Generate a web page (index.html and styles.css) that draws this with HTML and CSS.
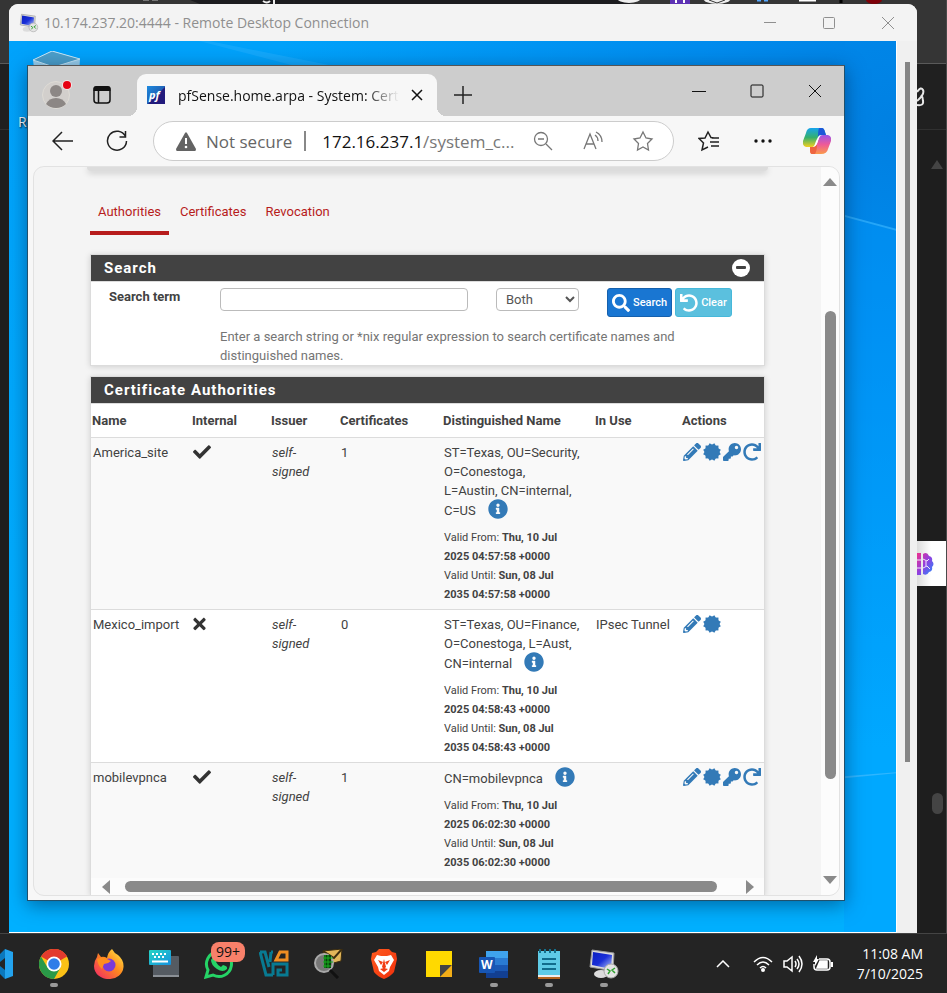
FILE: index.html
```html
<!DOCTYPE html>
<html lang="en">
<head>
<meta charset="utf-8">
<title>Remote Desktop Connection</title>
<link rel="stylesheet" href="styles.css">
</head>
<body>
<svg class="defs" aria-hidden="true">
  <defs>
    <linearGradient id="g-screen" x1="0" y1="0" x2="1" y2="1"><stop offset="0" stop-color="#0a1fc0"/><stop offset=".5" stop-color="#1a2fd8"/><stop offset="1" stop-color="#b9cdf8"/></linearGradient>
    <linearGradient id="g-pf" x1="0" y1="0" x2="1" y2="1"><stop offset="0" stop-color="#1d8be0"/><stop offset=".5" stop-color="#2064b8"/><stop offset=".55" stop-color="#221a7c"/></linearGradient>
    <linearGradient id="g-fox" x1="1" y1="0" x2="0" y2="1"><stop offset="0" stop-color="#fff24a"/><stop offset=".45" stop-color="#ff8a1e"/><stop offset="1" stop-color="#f0206c"/></linearGradient>
    <linearGradient id="g-cop1" x1="0" y1="0" x2="0" y2="1"><stop offset="0" stop-color="#16a4ee"/><stop offset=".5" stop-color="#35b06c"/><stop offset="1" stop-color="#f4d020"/></linearGradient>
    <linearGradient id="g-cop2" x1="0" y1="0" x2="0" y2="1"><stop offset="0" stop-color="#9a56e8"/><stop offset=".5" stop-color="#ee5a98"/><stop offset="1" stop-color="#fb9a4a"/></linearGradient>
    <linearGradient id="g-brain" x1="0" y1="0" x2="1" y2="1"><stop offset="0" stop-color="#f0308c"/><stop offset=".5" stop-color="#9040e0"/><stop offset="1" stop-color="#1e90ff"/></linearGradient>
    <linearGradient id="g-brave" x1="0" y1="0" x2="1" y2="1"><stop offset="0" stop-color="#ff5a1e"/><stop offset="1" stop-color="#f0300c"/></linearGradient>
    <linearGradient id="g-key" x1="0" y1="0" x2="1" y2="1"><stop offset="0" stop-color="#27d6c4"/><stop offset="1" stop-color="#1590e0"/></linearGradient>
    <symbol id="i-rdp" viewBox="0 0 32 32"><path d="M4 2l22 3-1 18-23-4z" fill="#dadada" stroke="#999"/><path d="M5 4l19 3-1 14L4 17z" fill="url(#g-screen)"/><ellipse cx="13" cy="26" rx="7" ry="4" fill="#dcdcdc"/><circle cx="23" cy="23" r="7" fill="#e4e4e4" stroke="#aaa"/><path d="M19 21l3 2-2 3M27 20l-3 2 3 3" fill="none" stroke="#2fa12f" stroke-width="1.500"/></symbol>
    <symbol id="i-check" viewBox="0 0 512 512"><path d="M173.898 439.404l-166.4-166.4c-9.997-9.997-9.997-26.206 0-36.204l36.203-36.204c9.997-9.998 26.207-9.998 36.204 0L192 312.69 432.095 72.596c9.997-9.997 26.207-9.997 36.204 0l36.203 36.204c9.997 9.997 9.997 26.206 0 36.204l-294.4 294.401c-9.998 9.997-26.207 9.997-36.204-.001z"/></symbol>
    <symbol id="i-times" viewBox="0 0 352 512"><path d="M242.72 256l100.07-100.07c12.28-12.28 12.28-32.19 0-44.48l-22.24-22.24c-12.28-12.28-32.19-12.28-44.48 0L176 189.28 75.93 89.21c-12.28-12.28-32.19-12.28-44.48 0L9.21 111.45c-12.28 12.28-12.28 32.19 0 44.48L109.28 256 9.21 356.07c-12.28 12.28-12.28 32.19 0 44.48l22.24 22.24c12.28 12.28 32.2 12.28 44.48 0L176 322.72l100.07 100.07c12.28 12.28 32.2 12.28 44.48 0l22.24-22.24c12.28-12.28 12.28-32.19 0-44.48L242.72 256z"/></symbol>
    <symbol id="i-search" viewBox="0 0 512 512"><path d="M505 442.7L405.3 343c-4.5-4.5-10.6-7-17-7H372c27.6-35.3 44-79.7 44-128C416 93.1 322.9 0 208 0S0 93.1 0 208s93.1 208 208 208c48.3 0 92.7-16.4 128-44v16.3c0 6.4 2.5 12.5 7 17l99.7 99.7c9.4 9.4 24.6 9.4 33.9 0l28.3-28.3c9.4-9.4 9.4-24.6.1-34zM208 336c-70.7 0-128-57.2-128-128 0-70.7 57.2-128 128-128 70.7 0 128 57.2 128 128 0 70.7-57.2 128-128 128z"/></symbol>
    <symbol id="i-undo" viewBox="0 0 512 512"><path d="M212.333 224.333H12c-6.627 0-12-5.373-12-12V12C0 5.373 5.373 0 12 0h48c6.627 0 12 5.373 12 12v78.112C117.773 39.279 184.26 7.47 258.175 8.007c136.906.994 246.448 111.623 246.157 248.532C504.041 393.258 393.12 504 256.333 504c-64.089 0-122.496-24.313-166.51-64.215-5.099-4.622-5.334-12.554-.467-17.42l33.967-33.967c4.474-4.474 11.662-4.717 16.401-.525C170.76 415.336 211.58 432 256.333 432c97.268 0 176-78.716 176-176 0-97.267-78.716-176-176-176-58.496 0-110.28 28.476-142.274 72.333h98.274c6.627 0 12 5.373 12 12v48c0 6.627-5.373 12-12 12z"/></symbol>
    <symbol id="i-redo" viewBox="0 0 512 512"><path transform="translate(512 0) scale(-1 1)" d="M212.333 224.333H12c-6.627 0-12-5.373-12-12V12C0 5.373 5.373 0 12 0h48c6.627 0 12 5.373 12 12v78.112C117.773 39.279 184.26 7.47 258.175 8.007c136.906.994 246.448 111.623 246.157 248.532C504.041 393.258 393.12 504 256.333 504c-64.089 0-122.496-24.313-166.51-64.215-5.099-4.622-5.334-12.554-.467-17.42l33.967-33.967c4.474-4.474 11.662-4.717 16.401-.525C170.76 415.336 211.58 432 256.333 432c97.268 0 176-78.716 176-176 0-97.267-78.716-176-176-176-58.496 0-110.28 28.476-142.274 72.333h98.274c6.627 0 12 5.373 12 12v48c0 6.627-5.373 12-12 12z"/></symbol>
    <symbol id="i-info" viewBox="0 0 512 512"><path d="M256 8C119.043 8 8 119.083 8 256c0 136.997 111.043 248 248 248s248-111.003 248-248C504 119.083 392.957 8 256 8zm0 110c23.196 0 42 18.804 42 42s-18.804 42-42 42-42-18.804-42-42 18.804-42 42-42zm56 254c0 6.627-5.373 12-12 12h-88c-6.627 0-12-5.373-12-12v-24c0-6.627 5.373-12 12-12h12v-64h-12c-6.627 0-12-5.373-12-12v-24c0-6.627 5.373-12 12-12h64c6.627 0 12 5.373 12 12v100h12c6.627 0 12 5.373 12 12v24z"/></symbol>
    <symbol id="i-key" viewBox="0 0 512 512"><path d="M512 176.001C512 273.203 433.202 352 336 352c-11.22 0-22.19-1.062-32.827-3.069l-24.012 27.014A23.999 23.999 0 0 1 261.223 384H224v40c0 13.255-10.745 24-24 24h-40v40c0 13.255-10.745 24-24 24H24c-13.255 0-24-10.745-24-24v-78.059c0-6.365 2.529-12.47 7.029-16.971l161.802-161.802C163.108 213.814 160 195.271 160 176 160 78.798 238.797.001 335.999 0 433.488-.001 512 78.511 512 176.001zM336 128c0 26.51 21.49 48 48 48s48-21.49 48-48-21.49-48-48-48-48 21.49-48 48z"/></symbol>
    <symbol id="i-pencil" viewBox="0 0 512 512"><path d="M497.9 142.1l-46.1 46.1c-4.7 4.7-12.3 4.7-17 0l-111-111c-4.7-4.7-4.7-12.3 0-17l46.1-46.1c18.7-18.7 49.1-18.7 67.9 0l60.1 60.1c18.8 18.7 18.8 49.1 0 67.9zM284.2 99.8L21.6 362.4.4 483.9c-2.9 16.4 11.4 30.6 27.8 27.8l121.5-21.3 262.6-262.6c4.7-4.7 4.7-12.3 0-17l-111-111c-4.8-4.7-12.4-4.7-17.1 0zM124.1 339.9c-5.5-5.5-5.5-14.3 0-19.8l154-154c5.5-5.5 14.3-5.5 19.8 0s5.5 14.3 0 19.8l-154 154c-5.5 5.5-14.3 5.5-19.8 0zM88 424h48v36.3l-64.5 11.3-31.1-31.1L51.7 376H88v48z"/></symbol>
    <symbol id="i-cert" viewBox="0 0 24 24"><rect x="3.400" y="3.400" width="17.200" height="17.200"/><rect x="3.400" y="3.400" width="17.200" height="17.200" transform="rotate(30 12 12)"/><rect x="3.400" y="3.400" width="17.200" height="17.200" transform="rotate(60 12 12)"/></symbol>
  </defs>
</svg>

<div class="desktop">
  <div class="host-top">
    <svg viewBox="0 0 947 6" width="947" height="6" aria-hidden="true"><path d="M190 0h440v4H200z" fill="#1c1c1f"/><path d="M143 0h6M152 0h6" stroke="#777" stroke-width="2"/><path d="M263 1q4 3 7 0M274 0v4" stroke="#eee" stroke-width="2" fill="none"/><ellipse cx="629" cy="-2" rx="12" ry="5" fill="#eee"/><path d="M670 0h20v4h-20z" fill="#5d32b4"/><path d="M676 0v3M684 0v3" stroke="#fff" stroke-width="2"/><ellipse cx="717" cy="-2" rx="14" ry="6" fill="#eee"/><path d="M709 0l8 3 8-3" stroke="#333" fill="none"/><path d="M757 0h4M764 0h4" stroke="#55a8ff" stroke-width="3"/><path d="M799 0h17" stroke="#fff" stroke-width="3"/><path d="M841 0v3" stroke="#000" stroke-width="3"/><ellipse cx="874" cy="0" rx="8" ry="4" fill="#7d0008"/></svg>
  </div>
  <aside class="host-side">
    <svg class="pen" viewBox="0 0 9 20" width="9" height="20" aria-hidden="true"><path d="M0 5Q4-1 6 3T0 14M0 18q7 1 6-4 0-4-2-6" fill="none" stroke="#e8e8e8" stroke-width="2"/></svg>
    <i class="host-up"></i>
    <div class="brain"><svg viewBox="0 0 17 24" width="17" height="24" aria-hidden="true"><path d="M0 1h4v22H0zM6 2q4-3 6 2 4 1 3 5 3 3 0 6 1 4-3 5-2 4-6 2z" fill="url(#g-brain)"/><path d="M0 8h4M0 16h4M6 7l4 2 2-2M6 16l4-2 3 3M9 9v5" stroke="#f1e8fb" fill="none"/></svg></div>
    <i class="host-thumb"></i>
  </aside>

  <section class="rdp">
    <header class="rdp-bar">
      <svg width="20" height="20" aria-hidden="true"><use href="#i-rdp"/></svg>
      <span class="rdp-title">10.174.237.20:4444 - Remote Desktop Connection</span>
      <button class="wbtn" aria-label="Minimize"><svg width="14" height="14" viewBox="0 0 14 14"><path d="M1 6.500h12"/></svg></button>
      <button class="wbtn" aria-label="Maximize"><svg width="14" height="14" viewBox="0 0 14 14"><rect x="1.500" y="1.500" width="11" height="11" rx="1"/></svg></button>
      <button class="wbtn" aria-label="Close"><svg width="14" height="14" viewBox="0 0 14 14"><path d="M1 1l12 12M13 1L1 13"/></svg></button>
    </header>
    <div class="rdp-body">
      <div class="wallpaper">
        <svg class="rays" viewBox="0 0 887 892" preserveAspectRatio="none" aria-hidden="true"><path d="M190 0L290 26H330L200 0z" fill="#35b4ff" opacity=".35"/><path d="M835 176l52 14v702h-52z" fill="#009cff" opacity=".35"/><path d="M835 176l52 14v-2l-52-14z" fill="#35b4ff" opacity=".7"/><path d="M835 738l52-5v-1l-52 4z" fill="#2fb6ff"/></svg>
        <div class="bin">
          <svg viewBox="0 0 48 60" width="48" height="60" aria-hidden="true"><path d="M0 9L19 0l28 8-3 45-38 3z" fill="#9bd1ee"/><path d="M0 9L19 0l28 8-26 8z" fill="#4c9fca" stroke="#c8e8f7"/></svg>
          <span>Recycle Bin</span>
        </div>

        <section class="edge">
          <header class="tabstrip">
            <button class="profile" aria-label="Profile"><svg width="30" height="30" viewBox="0 0 30 30"><circle cx="14" cy="15" r="13.500" fill="#d2cfcc" stroke="#dedbd5"/><circle cx="14" cy="11" r="6" fill="#8c8785"/><path d="M4 24q3-6 10-6t10 6q-4 4-10 4T4 24z" fill="#8c8785"/><circle cx="25" cy="5" r="5" fill="#f3e4e4"/><circle cx="25" cy="5" r="4" fill="#e60012"/></svg></button>
            <button class="tabmenu" aria-label="Tab actions"><svg width="20" height="20" viewBox="0 0 20 20"><rect x="2" y="2" width="16" height="16" rx="3" fill="none" stroke="#111" stroke-width="1.500"/><path d="M1.500 3q0-2 3-2h11q3 0 3 2v3h-17z" fill="#111"/><path d="M6.500 6v12" stroke="#111" stroke-width="1.500"/></svg></button>
            <div class="tab">
              <svg class="fav" width="18" height="18" viewBox="0 0 18 18"><rect width="18" height="18" fill="url(#g-pf)"/><text x="2" y="13" class="pf">pf</text></svg>
              <span class="tab-title">pfSense.home.arpa - System: Cert</span>
              <button aria-label="Close tab"><svg width="12" height="12" viewBox="0 0 12 12"><path d="M1 1l10 10M11 1L1 11" stroke="#111" stroke-width="1.500"/></svg></button>
            </div>
            <button class="newtab" aria-label="New tab"><svg width="18" height="18" viewBox="0 0 18 18"><path d="M9 0v18M0 9h18" stroke="#222" stroke-width="1.500"/></svg></button>
            <div class="winctl">
              <button aria-label="Minimize"><svg width="14" height="14" viewBox="0 0 14 14"><path d="M0 7.500h14"/></svg></button>
              <button aria-label="Maximize"><svg width="14" height="14" viewBox="0 0 14 14"><rect x="1" y="1" width="12" height="12" rx="1"/></svg></button>
              <button aria-label="Close"><svg width="14" height="14" viewBox="0 0 14 14"><path d="M1 1l12 12M13 1L1 13"/></svg></button>
            </div>
          </header>
          <nav class="toolbar">
            <button class="tool" aria-label="Back"><svg width="22" height="20" viewBox="0 0 22 20"><path d="M10 1L1 10l9 9M1 10h20"/></svg></button>
            <button class="tool" aria-label="Refresh"><svg width="22" height="22" viewBox="0 0 22 22"><path d="M19.500 6.500A9.500 9.500 0 1 0 20.500 11M19.500 1v6h-6"/></svg></button>
            <div class="address">
              <svg width="20" height="19" viewBox="0 0 20 19"><path d="M9 1q1-1.500 2 0l9 16q0 2-1 2H1q-1 0-1-2z" fill="#636363"/><path d="M10 6v6" stroke="#fff" stroke-width="2"/><circle cx="10" cy="15" r="1.300" fill="#fff"/></svg>
              <span class="notsecure">Not secure</span>
              <span class="sep"></span>
              <span class="url"><b>172.16.237.1</b>/system_c...</span>
              <button aria-label="Zoom"><svg width="20" height="20" viewBox="0 0 20 20"><circle cx="8" cy="8" r="6.500"/><path d="M13 13l6 6M5 8h6"/></svg></button>
              <button aria-label="Read aloud"><svg width="20" height="20" viewBox="0 0 20 20"><path d="M1 18L7 3l6 15M3 13h8M12 4q3 2 3 6M13 1q6 3 6 10"/></svg></button>
              <button aria-label="Favorite"><svg width="22" height="22" viewBox="0 0 22 22"><path d="M11 2l3 6 6 1-4.500 4.500 1 6.500L11 17l-5.500 3 1-6.500L2 9l6-1z"/></svg></button>
            </div>
            <button class="tool" aria-label="Favorites"><svg width="22" height="22" viewBox="0 0 22 22"><path d="M16 8l-3-.5L10 2 7 8 1 8.500l4.500 4.500L4 20l6-3M14 8h7M12 12h9M13 16h8"/></svg></button>
            <button class="tool" aria-label="More"><svg width="18" height="6" viewBox="0 0 18 6"><g fill="#111" stroke="none"><circle cx="2" cy="3" r="1.700"/><circle cx="9" cy="3" r="1.700"/><circle cx="16" cy="3" r="1.700"/></g></svg></button>
            <button class="tool" aria-label="Copilot"><svg width="28" height="28" viewBox="0 0 28 28"><g stroke="none"><path d="M8 1h11q2 0 3 4l1 3h-4q-3 0-4 4l-2 5q-1 3-4 3H3q-4-1-3-6L3 6q1-5 5-5z" fill="url(#g-cop1)"/><path d="M16 1h3q2 0 3 4l1 3h-4q-3 0-4 3 0-8 1-10z" fill="#1c58d8"/><path d="M20 27H9q-2 0-2-4l0-3h3q3 0 4-4l2-5q1-3 4-3h5q4 1 3 6l-3 8q-1 5-7 5z" fill="url(#g-cop2)"/><path d="M12 27H9q-2 0-2-4v-3h3q3 0 4-3 0 7-2 10z" fill="#ee6440"/><path d="M15 10q1-2 3-2-2 2-3 6-1 5-5 6 2-2 3-6z" fill="#fff"/></g></svg></button>
          </nav>

          <div class="view">
            <main class="page">
              <div class="navshadow"></div>
              <nav class="tabs"><a class="on" href="#a">Authorities</a><a href="#c">Certificates</a><a href="#r">Revocation</a></nav>

              <form class="panel">
                <h2>Search <button type="button" class="fold" aria-label="Collapse"><svg width="18" height="18" viewBox="0 0 18 18"><circle cx="9" cy="9" r="9" fill="#fff"/><rect x="4" y="7" width="10" height="3" rx="1" fill="#424242"/></svg></button></h2>
                <div class="search">
                  <label for="term">Search term</label>
                  <input id="term" type="text">
                  <select id="scope" aria-label="Search in"><option>Both</option></select>
                  <div class="btns">
                    <button type="button" class="btn blue"><svg width="18" height="18"><use href="#i-search"/></svg>Search</button>
                    <button type="button" class="btn cyan"><svg width="18" height="18"><use href="#i-undo"/></svg>Clear</button>
                  </div>
                  <p>Enter a search string or *nix regular expression to search certificate names and distinguished names.</p>
                </div>
              </form>

              <section class="panel grow">
                <h2>Certificate Authorities</h2>
                <div class="tablewrap">
                <table>
                  <colgroup><col class="c1"><col class="c2"><col class="c3"><col class="c4"><col class="c5"><col class="c6"><col></colgroup>
                  <thead><tr><th>Name</th><th>Internal</th><th>Issuer</th><th>Certificates</th><th>Distinguished Name</th><th>In Use</th><th>Actions</th></tr></thead>
                  <tbody>
                    <tr><td>America_site</td><td><svg class="mark" width="18" height="18"><use href="#i-check"/></svg></td><td><i>self-<br>signed</i></td><td>1</td>
                      <td>ST=Texas, OU=Security,<br>O=Conestoga,<br>L=Austin, CN=internal,<div class="last">C=US <button aria-label="Details"><svg width="20" height="20"><use href="#i-info"/></svg></button></div>
                        <div class="valid">Valid From: <b>Thu, 10 Jul<br>2025 04:57:58 +0000</b><br>Valid Until: <b>Sun, 08 Jul<br>2035 04:57:58 +0000</b></div></td>
                      <td></td>
                      <td class="act"><a href="#e" aria-label="Edit"><svg><use href="#i-pencil"/></svg></a><a href="#x" aria-label="Export CA"><svg><use href="#i-cert"/></svg></a><a href="#k" aria-label="Export key"><svg><use href="#i-key"/></svg></a><a href="#n" aria-label="Renew"><svg><use href="#i-redo"/></svg></a></td></tr>
                    <tr><td>Mexico_import</td><td><svg class="mark" width="13" height="18"><use href="#i-times"/></svg></td><td><i>self-<br>signed</i></td><td>0</td>
                      <td>ST=Texas, OU=Finance,<br>O=Conestoga, L=Aust,<div class="last">CN=internal <button aria-label="Details"><svg width="20" height="20"><use href="#i-info"/></svg></button></div>
                        <div class="valid">Valid From: <b>Thu, 10 Jul<br>2025 04:58:43 +0000</b><br>Valid Until: <b>Sun, 08 Jul<br>2035 04:58:43 +0000</b></div></td>
                      <td>IPsec Tunnel</td>
                      <td class="act"><a href="#e" aria-label="Edit"><svg><use href="#i-pencil"/></svg></a><a href="#x" aria-label="Export CA"><svg><use href="#i-cert"/></svg></a></td></tr>
                    <tr><td>mobilevpnca</td><td><svg class="mark" width="18" height="18"><use href="#i-check"/></svg></td><td><i>self-<br>signed</i></td><td>1</td>
                      <td><div class="last">CN=mobilevpnca <button aria-label="Details"><svg width="20" height="20"><use href="#i-info"/></svg></button></div>
                        <div class="valid">Valid From: <b>Thu, 10 Jul<br>2025 06:02:30 +0000</b><br>Valid Until: <b>Sun, 08 Jul<br>2035 06:02:30 +0000</b></div></td>
                      <td></td>
                      <td class="act"><a href="#e" aria-label="Edit"><svg><use href="#i-pencil"/></svg></a><a href="#x" aria-label="Export CA"><svg><use href="#i-cert"/></svg></a><a href="#k" aria-label="Export key"><svg><use href="#i-key"/></svg></a><a href="#n" aria-label="Renew"><svg><use href="#i-redo"/></svg></a></td></tr>
                  </tbody>
                </table>
                </div>
                <div class="hscroll"><svg width="8" height="14"><path d="M8 0v14L0 7z" fill="#8a8a8a"/></svg><i></i><svg width="8" height="14"><path d="M0 0v14l8-7z" fill="#8a8a8a"/></svg></div>
              </section>
            </main>
            <div class="vscroll"><svg width="14" height="8"><path d="M0 8h14L7 0z" fill="#8a8a8a"/></svg><div class="track"><i></i></div><svg width="14" height="8"><path d="M0 0h14L7 8z" fill="#8a8a8a"/></svg></div>
          </div>
        </section>
      </div>
      <div class="rdp-scroll"><i></i></div>
    </div>
  </section>
</div>

<footer class="taskbar">
  <button class="app first" aria-label="Code"><svg width="13" height="30" viewBox="0 0 13 30"><path d="M5 0l8 3v24l-8 3z" fill="#23a3ee"/><path d="M5 0v9L0 13V5zM5 30v-9l-5-4v8z" fill="#0b78bd"/></svg></button>
  <button class="app run" aria-label="Chrome"><svg width="30" height="30" viewBox="0 0 30 30"><circle cx="15" cy="15" r="15" fill="#fbc116"/><path d="M15 15L2 7.500A15 15 0 0 1 28 7.500z" fill="#e33b2e"/><path d="M15 0a15 15 0 0 1 13 7.500H15z" fill="#e33b2e"/><path d="M2 7.500A15 15 0 0 0 15 30l6.500-11.500L15 15 8.500 18.500z" fill="#2a9a48"/><circle cx="15" cy="15" r="7.500" fill="#fff"/><circle cx="15" cy="15" r="5.800" fill="#2f7de8"/></svg></button>
  <button class="app" aria-label="Firefox"><svg width="30" height="30" viewBox="0 0 30 30"><path d="M18 0q2 4 6 6 6 5 5.500 12A14 13 0 0 1 15 30 14 13 0 0 1 0 17q0-5 3-9l1-4 3 4q3-1 6 1 1-6 5-9z" fill="url(#g-fox)"/><circle cx="15" cy="16" r="6.500" fill="#7a3ad8"/><path d="M3 10q5-3 10 0l4 2q-3 3-7 3l-2 5q-4-3-5-10z" fill="#ff8e20"/></svg></button>
  <button class="app" aria-label="On-screen keyboard"><svg width="30" height="30" viewBox="0 0 30 30"><rect x="4" y="7" width="26" height="21" rx="1" fill="#555b62"/><path d="M4 27h26" stroke="#8b9096" stroke-width="2"/><rect y="1" width="22" height="15" rx="1" fill="url(#g-key)"/><path d="M3 5h16M5 8h12" stroke="#fff" stroke-width="2" stroke-dasharray="2 2"/><path d="M3 12.500h16" stroke="#fff" stroke-width="2"/></svg></button>
  <button class="app" aria-label="WhatsApp"><svg width="30" height="30" viewBox="0 0 30 30"><path d="M2 28l2-7A12.500 12.500 0 1 1 9 26z" fill="none" stroke="#25d366" stroke-width="3"/><path d="M9 8q3-2 4 2l-1 3q2 4 5 5l2-2q5 1 4 4-4 4-10 0T7 11z" fill="#25d366"/></svg><span class="badge">99+</span></button>
  <button class="app" aria-label="VirtualBox"><svg width="30" height="28" viewBox="0 0 30 28" fill="none" stroke-width="3"><path d="M1 2h5l4 15M1 2l6 23h7M12 2l-1 10M12 2h2" stroke="#087a91"/><path d="M14 25V14h14v11H19v-5h4" stroke="#087a91"/><path d="M17 10l4-8h7v8z" stroke="#ef8d22"/></svg></button>
  <button class="app" aria-label="Packet capture"><svg width="30" height="30" viewBox="0 0 30 30"><path d="M9 2l19-2-1 12-15 4z" fill="#e2b65a" stroke="#3c2d10"/><path d="M9 2l11 7 8-9" fill="none" stroke="#3c2d10" stroke-width="2"/><circle cx="10" cy="14" r="9" fill="#777" stroke="#a9a9a9" stroke-width="2"/><path d="M10 6h7v13h-7z" fill="#06420a"/><path d="M11 6v13M14 6v13M9 9h10M9 13h10M9 17h8" stroke="#18b020"/><path d="M16 21l8 8" stroke="#111" stroke-width="3"/></svg></button>
  <button class="app" aria-label="Brave"><svg width="26" height="30" viewBox="0 0 26 30"><path d="M8 0h10l3 3 4 1 1 6-3 13q-4 5-10 7-6-2-10-7L0 10l1-6 4-1z" fill="url(#g-brave)"/><path d="M6 6l4 1h6l4-1 3 5-4 7-1 4-5 4-5-4-1-4-4-7z" fill="#fff"/><path d="M7 11l5 2-2 3zM19 11l-5 2 2 3zM13 10l2 8-2 2-2-2zM9 20l4-1 4 1-4 3z" fill="#f23c12"/></svg></button>
  <button class="app" aria-label="Sticky Notes"><svg width="26" height="26" viewBox="0 0 26 26"><path d="M0 0h26v14L14 26H0z" fill="#ffd900"/><path d="M14 14h12L14 26z" fill="#444"/><path d="M26 14v12H14z" fill="#f3ae18"/></svg></button>
  <button class="app run" aria-label="Word"><svg width="30" height="28" viewBox="0 0 30 28"><path d="M7 1h22v7H7z" fill="#3fa3ee"/><path d="M7 8h22v7H7z" fill="#2a7bd3"/><path d="M7 15h22v6H7z" fill="#1a58b4"/><path d="M7 21h22v7H7z" fill="#123f91"/><rect y="7" width="16" height="16" rx="1" fill="#1756b5"/><text x="2" y="19" class="wd">W</text></svg></button>
  <button class="app run" aria-label="Notepad"><svg width="24" height="30" viewBox="0 0 24 30"><path d="M1 2h22v25H1z" fill="#5fcbe6"/><path d="M1 26h22v2H1z" fill="#eee"/><path d="M1 28h22v2H1z" fill="#b5651d"/><path d="M2 2h20" stroke="#14708c" stroke-width="4" stroke-dasharray="2 3"/><path d="M5 10h14M5 15h14M5 20h14" stroke="#116c8c" stroke-width="2"/></svg></button>
  <button class="app run" aria-label="Remote Desktop"><svg width="32" height="32"><use href="#i-rdp"/></svg></button>

  <div class="tray">
    <button aria-label="Show hidden icons"><svg width="14" height="8" viewBox="0 0 14 8"><path d="M1 7l6-6 6 6"/></svg></button>
    <button aria-label="Network"><svg width="20" height="16" viewBox="0 0 20 16"><path d="M1 6q9-9 18 0M4 9q6-6 12 0M7 12q3-3 6 0"/><circle cx="10" cy="14" r="2" fill="#fff" stroke="none"/></svg></button>
    <button aria-label="Volume"><svg width="20" height="18" viewBox="0 0 20 18"><path d="M1 6h3l5-4v14l-5-4H1zM12 6q2 3 0 6M14 4q4 5 0 10M16 1q6 8 0 16"/></svg></button>
    <button aria-label="Battery"><svg width="20" height="18" viewBox="0 0 20 18"><path d="M6 4h8q3 0 3 3v5q0 3-3 3H4q-3 0-3-3V9"/><path d="M7 6h7v7H4z" fill="#fff"/><path d="M18 7h2v5h-2z" fill="#fff" stroke="none"/><path d="M4 0L0 7h2v4l4-7H4z" fill="#fff" stroke="none"/></svg></button>
    <time>11:08 AM<br>7/10/2025</time>
  </div>
</footer>
</body>
</html>
```
FILE: styles.css
```css
* { box-sizing: border-box; }
html, body { height: 100%; }
body { margin: 0; display: flex; flex-direction: column; overflow: hidden; background: #202020; font-family: "Open Sans", "Noto Sans", sans-serif; }
button { border: 0; padding: 0; margin: 0; background: none; font: inherit; color: inherit; display: flex; align-items: center; justify-content: center; }
svg { display: block; flex: none; }
.defs { position: absolute; width: 0; height: 0; }

.desktop { flex: 1; min-height: 0; position: relative; background: linear-gradient(#353535 63px, #5a5a5a 63px, #5a5a5a 64px, #202020 64px, #202020 129px, #303030 129px, #303030 130px, #1e1e1e 130px); }
.host-top { height: 6px; overflow: hidden; }
.host-side { position: absolute; top: 0; right: 0; bottom: 0; width: 30px; border-right: 1px solid #4a4a4a; }
.pen { position: absolute; left: 0; top: 87px; }
.host-up { position: absolute; top: 160px; right: 3px; border: 6px solid transparent; border-top: 0; border-bottom: 9px solid #444; }
.brain { position: absolute; top: 541px; left: 0; right: 0; height: 45px; background: linear-gradient(90deg, #ddd, #fff 14px); display: flex; align-items: center; }
.host-thumb { position: absolute; right: 3px; top: 793px; width: 11px; height: 21px; border-radius: 6px; background: #444; }

.rdp { position: absolute; left: 9px; right: 30px; top: 4px; bottom: 0; display: flex; flex-direction: column; background: #f0f0f0; border-radius: 9px 9px 0 0; overflow: hidden; }
.rdp-bar { height: 37px; display: flex; align-items: center; padding-left: 10px; background: #f3f3f3; color: #8f8f8f; font-size: 14px; }
.rdp-title { flex: 1; padding-left: 5px; white-space: nowrap; }
.wbtn { width: 59px; height: 36px; }
.wbtn svg { fill: none; stroke: #8f8f8f; }
.rdp-body { flex: 1; min-height: 0; display: flex; }
.wallpaper { flex: 1; position: relative; border-bottom: 1px solid #fff; background: radial-gradient(circle at 100% 10%, #0080e2 0, rgba(0, 130, 232, .7) 200px, rgba(0, 166, 255, 0) 620px), linear-gradient(#00a2fb, #00b0ff 80%); }
.rays { position: absolute; inset: 0; width: 100%; height: 100%; }
.rdp-scroll { width: 21px; padding: 21px 7px 0 8px; border-left: 1px solid #fff; }
.rdp-scroll i { display: block; height: 700px; background: #858585; }
.bin { position: absolute; left: 9px; top: 10px; color: #fff; font-size: 14px; text-shadow: 1px 1px 2px #000; }
.bin svg { margin: 0 0 1px 15px; }

.edge { position: absolute; left: 18px; right: 51px; top: 24px; bottom: 31px; display: flex; flex-direction: column; border: 1px solid #21506c; border-top-color: #555; background: #f7f7f7; box-shadow: 0 4px 18px rgba(0, 30, 70, .5); }
.tabstrip { height: 50px; display: flex; align-items: flex-end; background: #cdcdcd; }
.profile { width: 58px; height: 42px; }
.tabmenu { width: 32px; height: 42px; }
.tab { position: relative; width: 300px; height: 42px; margin-left: 19px; display: flex; align-items: center; padding: 0 14px 0 10px; background: #f7f7f7; border-radius: 9px 9px 0 0; }
.tab::before, .tab::after { content: ""; position: absolute; bottom: 0; width: 9px; height: 9px; }
.tab::before { left: -9px; background: radial-gradient(circle at 0 0, #cdcdcd 9px, #f7f7f7 9px); }
.tab::after { right: -9px; background: radial-gradient(circle at 100% 0, #cdcdcd 9px, #f7f7f7 9px); }
.pf { font: italic 700 11px "Open Sans", sans-serif; fill: #fff; }
.tab-title { flex: 1; margin: 0 12px 0 13px; white-space: nowrap; font-size: 14px; color: #111; -webkit-mask-image: linear-gradient(90deg, #000 85%, transparent); mask-image: linear-gradient(90deg, #000 85%, transparent); }
.newtab { width: 34px; height: 42px; margin-left: 9px; }
.winctl { margin-left: auto; display: flex; align-self: flex-start; }
.winctl button { width: 58px; height: 49px; }
.winctl svg { fill: none; stroke: #111; }
.toolbar { height: 50px; display: flex; align-items: center; padding-left: 8px; }
.tool { width: 54px; height: 40px; }
.tool svg { fill: none; stroke: #222; stroke-width: 1.5; }
.address { flex: 1; min-width: 0; height: 40px; margin: 0 8px 0 9px; padding: 0 5px 0 22px; display: flex; align-items: center; background: #fff; border: 1px solid #ccc; border-radius: 20px; font-size: 17px; color: #777; white-space: nowrap; }
.address button { width: 50px; height: 36px; }
.address button svg { fill: none; stroke: #777; stroke-width: 1.3; }
.notsecure { margin-left: 10px; color: #666; }
.sep { width: 2px; height: 20px; margin: 0 16px 0 12px; background: #888; }
.url { flex: 1; min-width: 0; }
.url b { font-weight: 400; color: #111; }

.view { flex: 1; min-height: 0; margin: 0 4px 4px 5px; display: flex; overflow: hidden; border: 1px solid #e2e2e2; border-radius: 11px; background: #f4f4f4; }
.page { flex: 1; min-width: 0; padding: 0 56px; display: flex; flex-direction: column; font: 13px/19px Roboto, sans-serif; color: #424242; }
.navshadow { height: 4px; margin: 0 -3px; flex: none; background: #dcdcdc; border-radius: 0 0 4px 4px; box-shadow: 0 2px 6px rgba(0, 0, 0, .2); }
.tabs { display: flex; margin: 31px 0 19px; flex: none; }
.tabs a { height: 33px; padding: 0 8px; margin-right: 3px; color: #b71c1c; text-decoration: none; border-bottom: 4px solid transparent; }
.tabs .on { border-color: #b71c1c; }
.panel { margin-bottom: 10px; flex: none; background: #fff; border: 1px solid #dcdcdc; box-shadow: 0 1px 6px rgba(0, 0, 0, .15); }
.panel h2 { height: 27px; margin: 0; padding: 0 14px 0 13px; display: flex; justify-content: space-between; align-items: center; background: #424242; color: #fff; font-size: 15px; letter-spacing: 1px; border-bottom: 1px solid #dcdcdc; }
.search { display: grid; grid-template-columns: 83px 248px 83px 1fr; column-gap: 28px; padding: 6px 0 0 18px; align-content: start; }
.search label { font-weight: 700; line-height: 18px; }
.search label, .search input, .search select { height: 23px; }
.search input { width: 100%; border: 1px solid #bbb; border-radius: 4px; background: #fff; }
.search select { border: 1px solid #bbb; border-radius: 4px; background: #fff; color: #555; font: 13px Roboto, sans-serif; padding-left: 5px; }
.btns { display: flex; gap: 3px; }
.btn { height: 29px; padding: 0 4px; gap: 3px; border: 1px solid; border-radius: 3px; color: #fff; font-size: 11px; font-weight: 500; }
.btn svg { fill: #fff; }
.blue { background: #1976d2; border-color: #1560ad; }
.cyan { background: #5bc0de; border-color: #46b8da; }
.search p { grid-column: 2 / 5; margin: 10px 70px 0 0; color: #757575; }
.grow { flex: 1; min-height: 0; margin: 0; border-bottom: 0; display: flex; flex-direction: column; }
.grow h2 { flex: none; }
.tablewrap { flex: 1; min-height: 0; overflow: hidden; background: #f9f9f9; }
table { width: 100%; table-layout: fixed; border-collapse: collapse; background: #fff; }
.c1 { width: 100px; } .c2 { width: 79px; } .c3 { width: 69px; } .c4 { width: 103px; } .c5 { width: 152px; } .c6 { width: 87px; }
th { height: 33px; padding: 0 1px; text-align: left; font-weight: 700; white-space: nowrap; }
td { padding: 5px 0 5px 2px; vertical-align: top; border-top: 1px solid #dcdcdc; white-space: nowrap; }
tbody tr:nth-child(odd) { background: #f9f9f9; }
.mark { fill: #333; }
.last { height: 22px; display: flex; align-items: center; gap: 12px; }
.last svg { fill: #337ab7; }
.last button { height: 20px; align-self: flex-start; margin-top: -1px; }
.valid { margin-top: 6px; font-size: 11px; }
.act { line-height: 0; }
.act a { display: inline-block; margin-right: 2px; }
.act a:last-child { margin-right: 0; }
.act svg { width: 18px; height: 18px; fill: #337ab7; }
.hscroll { height: 17px; flex: none; display: flex; align-items: center; gap: 15px; padding: 0 10px 0 11px; background: #fcfcfc; }
.hscroll i { flex: 1; height: 11px; border-radius: 6px; background: #8a8a8a; margin-right: 14px; }
.vscroll { width: 18px; display: flex; flex-direction: column; align-items: center; padding: 11px 0; background: #fcfcfc; }
.track { flex: 1; width: 11px; padding-top: 125px; }
.track i { display: block; height: 468px; border-radius: 6px; background: #8a8a8a; }

.taskbar { height: 60px; flex: none; display: flex; background: #242424; border-top: 1px solid #444; }
.app { position: relative; width: 55px; height: 59px; }
.app.first { width: 26px; justify-content: flex-start; }
.run::after { content: ""; position: absolute; bottom: 6px; left: 24px; width: 8px; height: 4px; border-radius: 2px; background: #9a9a9a; }
.badge { position: absolute; left: 20px; top: 8px; padding: 0 5px; height: 20px; border-radius: 8px; background: #f8806a; color: #111; font-size: 14px; line-height: 20px; }
.wd { font: 700 12px "Open Sans", sans-serif; fill: #fff; }
.tray { margin-left: auto; display: flex; align-items: center; padding-right: 24px; color: #fff; }
.tray button { width: 30px; height: 40px; }
.tray button:first-child { width: 50px; }
.tray svg { fill: none; stroke: #fff; stroke-width: 1.5; }
.tray time { margin-left: 19px; font-size: 14px; line-height: 20px; text-align: right; }
```
